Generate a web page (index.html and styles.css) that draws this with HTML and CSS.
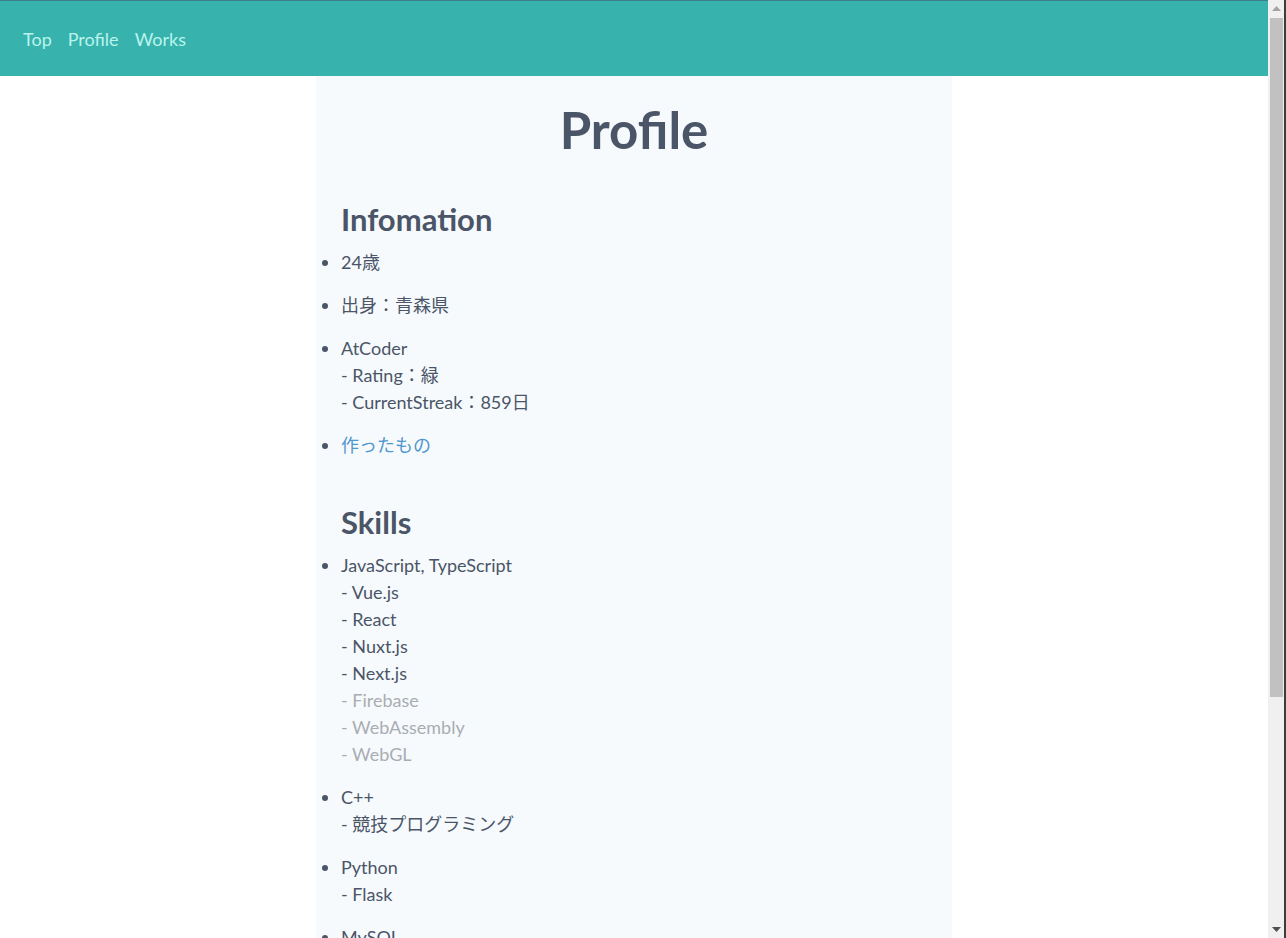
FILE: index.html
```html
<!DOCTYPE html>
<html lang="ja">
<head>
<meta charset="utf-8">
<title>Profile</title>
<link rel="stylesheet" href="styles.css">
</head>
<body>
<div class="window">
  <div class="page">
    <header class="header">
      <nav class="nav">
        <a class="nav-link" href="#">Top</a>
        <a class="nav-link" href="#">Profile</a>
        <a class="nav-link" href="#">Works</a>
      </nav>
    </header>
    <main class="main">
      <h1 class="title">Profile</h1>
      <section class="section">
        <h2 class="section-title">Infomation</h2>
        <ul class="list">
          <li>24歳</li>
          <li>出身：青森県</li>
          <li>AtCoder<br>- Rating：緑<br>- CurrentStreak：859日</li>
          <li><a class="link" href="#">作ったもの</a></li>
        </ul>
      </section>
      <section class="section">
        <h2 class="section-title">Skills</h2>
        <ul class="list">
          <li>JavaScript, TypeScript<br>- Vue.js<br>- React<br>- Nuxt.js<br>- Next.js<br><span class="muted">- Firebase<br>- WebAssembly<br>- WebGL</span></li>
          <li>C++<br>- 競技プログラミング</li>
          <li>Python<br>- Flask</li>
          <li>MySQL</li>
          <li>Git, GitHub</li>
          <li>Docker</li>
        </ul>
      </section>
    </main>
  </div>
  <div class="scrollbar" aria-hidden="true">
    <div class="sb-btn">
      <svg width="9" height="5" viewBox="0 0 9 5"><polygon points="4.5,0 9,5 0,5" fill="#a3a3a3"/></svg>
    </div>
    <div class="sb-track"><div class="sb-thumb"></div></div>
    <div class="sb-btn">
      <svg width="9" height="5" viewBox="0 0 9 5"><polygon points="0,0 9,0 4.5,5" fill="#505050"/></svg>
    </div>
  </div>
</div>
</body>
</html>
```

FILE: styles.css
```css
html, body {
  margin: 0;
  padding: 0;
  height: 100%;
  overflow: hidden;
}
body {
  font-family: "Lato", "Noto Sans CJK JP", sans-serif;
  color: #4a5568;
  background: #ffffff;
}
.window {
  height: 100vh;
  box-sizing: border-box;
  border-right: 2px solid #3c3c3c;
  display: flex;
}
.page {
  flex: 1;
  min-width: 0;
  overflow: hidden;
  border-top: 1px solid #3d7d88;
}
.scrollbar {
  width: 16px;
  flex: none;
  background: #f0f0f0;
  display: flex;
  flex-direction: column;
}
.sb-btn {
  height: 17px;
  flex: none;
  display: flex;
  align-items: center;
  justify-content: center;
}
.sb-track {
  flex: 1;
  padding-top: 1px;
}
.sb-thumb {
  height: 679px;
  margin: 0 1px 0 2px;
  background: #c1c1c1;
}
.header {
  height: 75px;
  background: #38b2ac;
  display: flex;
  align-items: center;
  padding-left: 23px;
}
.nav {
  display: flex;
  gap: 16px;
}
.nav-link {
  color: #b9f4ec;
  text-decoration: none;
  font-size: 18px;
}
.main {
  width: 636px;
  margin: 0 auto;
  background: #f7fafc;
  padding: 28px 25px 60px;
  box-sizing: border-box;
}
.title {
  margin: 0;
  text-align: center;
  font-size: 51px;
  line-height: 52px;
  font-weight: 700;
  color: #4a5568;
}
.section-title {
  margin: 0 0 12px;
  font-size: 31px;
  line-height: 36px;
  font-weight: 700;
  color: #4a5568;
}
.title + .section {
  margin-top: 45px;
}
.list {
  margin: 0 0 45px;
  padding: 0;
  list-style: disc outside;
  font-size: 18px;
  line-height: 27px;
}
.list li + li {
  margin-top: 16px;
}
.link {
  color: #4f97d0;
  text-decoration: none;
}
.muted {
  color: #a9adb3;
}
```
